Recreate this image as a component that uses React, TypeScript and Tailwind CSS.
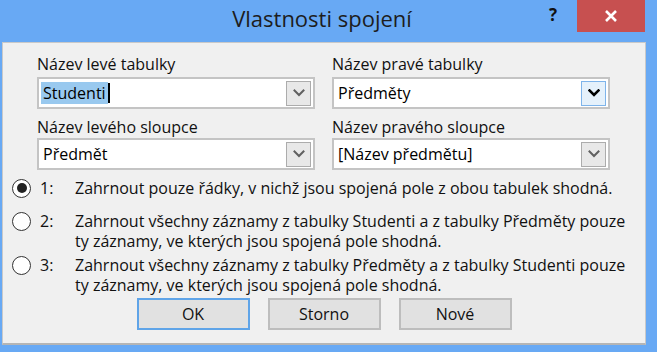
import React from "react";

const font = { fontFamily: '"Open Sans", "Noto Sans", sans-serif' };

function Chevron({ dark }: { dark?: boolean }) {
  return (
    <svg width="12" height="8" viewBox="0 0 12 8">
      <path
        d="M1.5 1.5 L6 6 L10.5 1.5"
        fill="none"
        stroke={dark ? "#000" : "#606060"}
        strokeWidth={dark ? 2.6 : 2}
        strokeLinecap="square"
      />
    </svg>
  );
}

function Combo({
  value,
  selected,
  active,
}: {
  value: string;
  selected?: boolean;
  active?: boolean;
}) {
  return (
    <div className="flex h-[32px] w-[278px] items-center border-2 border-[#c4c4c4] bg-white pl-[2px] pr-[2px]">
      <div className="flex flex-1 items-center">
        {selected ? (
          <>
            <span className="bg-[#99c9ef] px-[2px] leading-[22px] text-black">{value}</span>
            <span className="h-[20px] w-[2px] bg-black" />
          </>
        ) : (
          <span className="px-[2px] leading-[22px] text-black">{value}</span>
        )}
      </div>
      <div
        className={
          active
            ? "flex h-[25px] w-[25px] items-center justify-center border border-[#7eb4ea] bg-[#e5f1fb]"
            : "flex h-[25px] w-[25px] items-center justify-center border border-[#acacac] bg-[#e8e8e8]"
        }
      >
        <Chevron dark={active} />
      </div>
    </div>
  );
}

function Radio({ checked }: { checked?: boolean }) {
  return (
    <div className="flex h-[19px] w-[19px] shrink-0 items-center justify-center rounded-full border-[1.5px] border-[#333] bg-white">
      {checked && <div className="h-[10px] w-[10px] rounded-full bg-[#222]" />}
    </div>
  );
}

function Option({
  n,
  checked,
  lines,
}: {
  n: string;
  checked?: boolean;
  lines: string[];
}) {
  return (
    <div className="flex items-start">
      <div className="flex h-[20px] w-[28px] items-center">
        <Radio checked={checked} />
      </div>
      <div className="w-[35px] leading-[20px]">{n}</div>
      <div className="leading-[20px]">
        {lines.map((l, i) => (
          <div key={i}>{l}</div>
        ))}
      </div>
    </div>
  );
}

function Btn({ label, def }: { label: string; def?: boolean }) {
  return (
    <div
      className={
        def
          ? "flex h-[32px] w-[113px] items-center justify-center border-2 border-[#5fa4e8] bg-[#e1e1e1]"
          : "flex h-[32px] w-[113px] items-center justify-center border-2 border-[#bdbdbd] bg-[#e1e1e1]"
      }
    >
      {label}
    </div>
  );
}

export default function App() {
  return (
    <div
      className="flex h-[352px] w-[657px] flex-col overflow-hidden bg-[#68a9f4] text-[16px] text-[#111]"
      style={font}
    >
      <div className="flex h-[42px] shrink-0 items-start">
        <div className="flex h-[36px] flex-1 items-center justify-center pl-[115px] text-[22px] text-[#1d1d1d]">
          Vlastnosti spojení
        </div>
        <div className="flex h-[30px] w-[48px] items-center justify-center text-[17px] font-bold text-[#111]">
          ?
        </div>
        <div className="mr-[12px] flex h-[32px] w-[68px] items-center justify-center bg-[#c75050]">
          <svg width="14" height="14" viewBox="0 0 14 14">
            <path d="M2 2 L12 12 M12 2 L2 12" stroke="#fff" strokeWidth="2.6" />
          </svg>
        </div>
      </div>
      <div className="ml-[2px] flex h-[303px] w-[644px] shrink-0 flex-col border border-[#c9c9c9] border-b-2 border-b-[#b5b5b5] bg-[#f0f0f0]">
        <div className="flex gap-[17px] pl-[34px] pt-[11px]">
          <div className="flex flex-col">
            <div className="leading-[20px]">Název levé tabulky</div>
            <div className="mt-[3px]">
              <Combo value="Studenti" selected />
            </div>
            <div className="mt-[8px] leading-[20px]">Název levého sloupce</div>
            <div className="mt-[1px]">
              <Combo value="Předmět" />
            </div>
          </div>
          <div className="flex flex-col">
            <div className="leading-[20px]">Název pravé tabulky</div>
            <div className="mt-[3px]">
              <Combo value="Předměty" active />
            </div>
            <div className="mt-[8px] leading-[20px]">Název pravého sloupce</div>
            <div className="mt-[1px]">
              <Combo value="[Název předmětu]" />
            </div>
          </div>
        </div>
        <div className="mt-[8px] flex flex-col pl-[9px]">
          <Option
            n="1:"
            checked
            lines={["Zahrnout pouze řádky, v nichž jsou spojená pole z obou tabulek shodná."]}
          />
          <div className="mt-[13px]">
            <Option
              n="2:"
              lines={[
                "Zahrnout všechny záznamy z tabulky Studenti a z tabulky Předměty pouze",
                "ty záznamy, ve kterých jsou spojená pole shodná.",
              ]}
            />
          </div>
          <div className="mt-[4px]">
            <Option
              n="3:"
              lines={[
                "Zahrnout všechny záznamy z tabulky Předměty a z tabulky Studenti pouze",
                "ty záznamy, ve kterých jsou spojená pole shodná.",
              ]}
            />
          </div>
        </div>
        <div className="mt-[3px] flex justify-center gap-[18px]">
          <Btn label="OK" def />
          <Btn label="Storno" />
          <Btn label="Nové" />
        </div>
      </div>
    </div>
  );
}
